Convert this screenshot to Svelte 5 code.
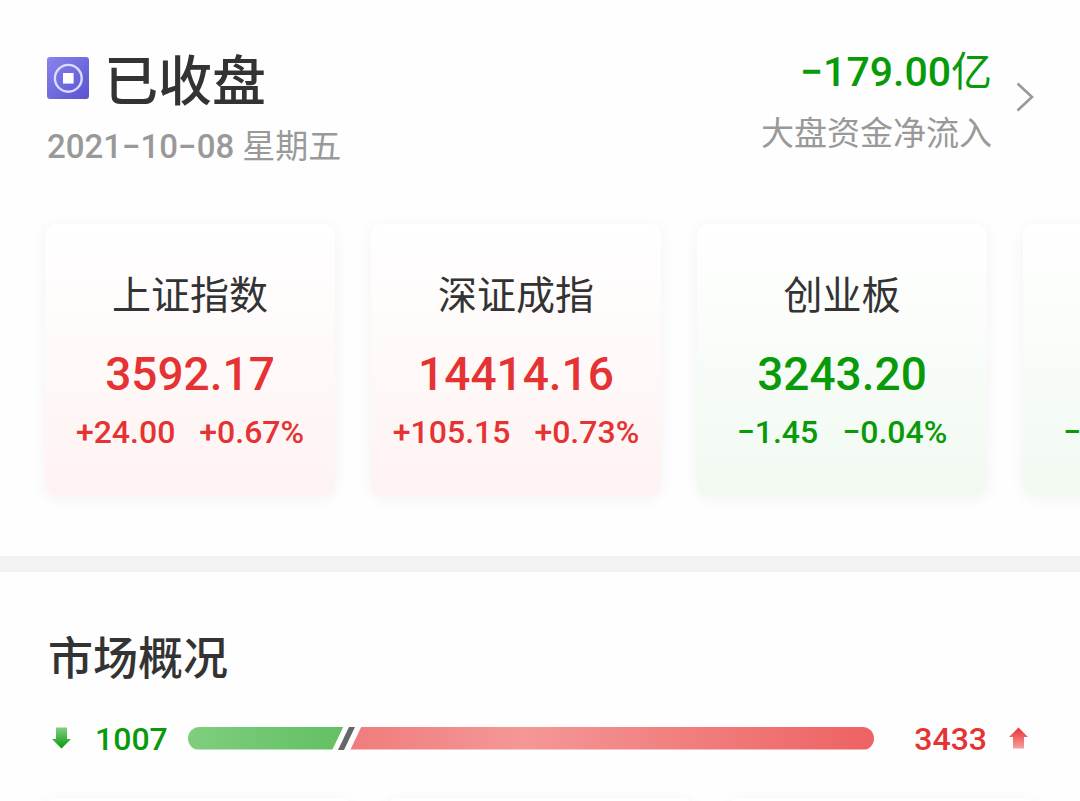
<script>
  const indices = [
    { name: '上证指数', value: '3592.17', change: '+24.00', percent: '+0.67%', trend: 'up' },
    { name: '深证成指', value: '14414.16', change: '+105.15', percent: '+0.73%', trend: 'up' },
    { name: '创业板', value: '3243.20', change: '−1.45', percent: '−0.04%', trend: 'down' },
    { name: '', value: '', change: '−', percent: '', trend: 'down', partial: true }
  ];
  const fallers = 1007;
  const risers = 3433;
  const fallShare = (fallers / (fallers + risers)) * 100;
</script>

<main class="page">
  <header class="header">
    <div class="status">
      <div class="title-row">
        <svg class="logo" viewBox="0 0 42 42" aria-hidden="true">
          <defs>
            <linearGradient id="logo-fill" x1="0" y1="0" x2="1" y2="1">
              <stop offset="0" stop-color="#8785ee" />
              <stop offset="1" stop-color="#5a52d0" />
            </linearGradient>
          </defs>
          <rect width="42" height="42" rx="3" fill="url(#logo-fill)" />
          <circle cx="21.3" cy="21.3" r="13.4" fill="none" stroke="#dcdcfb" stroke-width="2.4" />
          <rect x="16" y="16" width="10.6" height="10.6" fill="#fff" />
        </svg>
        <h1>已收盘</h1>
      </div>
      <p class="date"><span class="digits">2021−10−08</span> 星期五</p>
    </div>
    <a class="flow" href="#flow">
      <span class="flow-text">
        <span class="amount down"><span class="digits">−179.00</span>亿</span>
        <span class="flow-label">大盘资金净流入</span>
      </span>
      <svg class="chevron" viewBox="0 0 18 30" aria-hidden="true">
        <path d="M1.5 1.5 L16 15 L1.5 28.5" fill="none" stroke="#999" stroke-width="2.6" />
      </svg>
    </a>
  </header>

  <section class="indices">
    {#each indices as item}
      <article class="card {item.trend}" class:partial={item.partial}>
        <h3>{item.name}</h3>
        <p class="value">{item.value}</p>
        <p class="changes"><span>{item.change}</span><span>{item.percent}</span></p>
      </article>
    {/each}
  </section>

  <section class="overview">
    <h2>市场概况</h2>
    <div class="breadth">
      <svg class="arrow" viewBox="0 0 20 22" aria-hidden="true">
        <defs>
          <linearGradient id="fall-fill" x1="0" y1="0" x2="0" y2="1">
            <stop offset="0" stop-color="#85cc85" />
            <stop offset="1" stop-color="#099a09" />
          </linearGradient>
        </defs>
        <path d="M5 0.5 H16 V12 H20 L10.5 21.5 L1 12 H5 Z" fill="url(#fall-fill)" />
      </svg>
      <span class="count down">{fallers}</span>
      <div class="bar">
        <div class="fall" style="width: {fallShare}%"></div>
        <svg class="slash" viewBox="0 0 17 23" aria-hidden="true">
          <path d="M11 0 H17 L6 23 H0 Z" fill="#666" />
        </svg>
        <div class="rise"></div>
      </div>
      <span class="count up">{risers}</span>
      <svg class="arrow" viewBox="0 0 20 22" aria-hidden="true">
        <defs>
          <linearGradient id="rise-fill" x1="0" y1="0" x2="0" y2="1">
            <stop offset="0" stop-color="#e83030" />
            <stop offset="1" stop-color="#f7a0a0" />
          </linearGradient>
        </defs>
        <path d="M4 21.5 H15 V10 H19 L9.5 0.5 L0 10 H4 Z" fill="url(#rise-fill)" />
      </svg>
    </div>
    <div class="tiles">
      <div class="tile"></div>
      <div class="tile"></div>
      <div class="tile"></div>
    </div>
  </section>
</main>

<style>
  :global(body) {
    margin: 0;
    background: #fefefe;
  }
  .page {
    box-sizing: border-box;
    height: 100vh;
    overflow: hidden;
    display: flex;
    flex-direction: column;
    background: #fefefe;
    color: #333;
    font-family: Roboto, "Noto Sans CJK SC", sans-serif;
  }
  h1, h2, h3, p {
    margin: 0;
  }
  .up { color: #e53333; }
  .down { color: #099a09; }
  .digits { font-weight: 500; }

  .header {
    display: flex;
    justify-content: space-between;
    height: 132px;
    padding: 44px 46px 0 47px;
  }
  .title-row {
    display: flex;
    gap: 15px;
    height: 72px;
  }
  .logo {
    width: 42px;
    height: 42px;
    margin-top: 13px;
  }
  h1 {
    font-size: 54px;
    line-height: 78px;
    font-weight: 500;
  }
  .date {
    font-size: 33px;
    line-height: 62px;
    color: #999;
  }
  .flow {
    display: flex;
    align-items: center;
    gap: 24px;
    height: 106px;
    color: #999;
    text-decoration: none;
  }
  .flow-text {
    display: flex;
    flex-direction: column;
    align-items: flex-end;
    padding-top: 18px;
  }
  .amount {
    font-size: 41px;
    line-height: 56px;
  }
  .flow-label {
    font-size: 33px;
    line-height: 68px;
  }
  .chevron {
    width: 18px;
    height: 30px;
  }

  .indices {
    display: flex;
    gap: 36px;
    padding: 48px 0 60px 45px;
    overflow: hidden;
    flex: none;
    border-bottom: 16px solid #f3f3f3;
  }
  .card {
    box-sizing: border-box;
    flex: 0 0 290px;
    height: 272px;
    padding-top: 42px;
    border-radius: 12px;
    text-align: center;
    box-shadow: 0 2px 16px rgba(0, 0, 0, 0.05);
  }
  .card.up { background: linear-gradient(#fff, #fef3f2); }
  .card.down { background: linear-gradient(#fff, #f1f9f1); }
  h3 {
    height: 60px;
    font-size: 39px;
    line-height: 60px;
    font-weight: 400;
    color: #333;
  }
  .value {
    height: 72px;
    font-size: 46px;
    line-height: 96px;
    font-weight: 500;
  }
  .changes {
    display: flex;
    justify-content: center;
    gap: 24px;
    font-size: 32px;
    line-height: 68px;
    font-weight: 500;
  }
  .partial .changes {
    justify-content: flex-start;
    padding-left: 40px;
  }

  .overview {
    padding: 54px 45px 0;
  }
  h2 {
    padding-left: 3px;
    font-size: 45px;
    line-height: 68px;
    font-weight: 500;
  }
  .breadth {
    display: flex;
    align-items: center;
    height: 60px;
    margin-top: 14px;
    padding: 0 6px;
  }
  .arrow {
    flex: none;
    width: 20px;
    height: 22px;
  }
  .count {
    font-size: 32px;
    line-height: 60px;
    padding-top: 2px;
    font-weight: 500;
  }
  .count.down { margin: 0 20px 0 24px; }
  .count.up { margin: 0 22px 0 40px; }
  .bar {
    flex: 1;
    display: flex;
    height: 23px;
    border-radius: 12px;
    overflow: hidden;
  }
  .fall {
    flex: none;
    background: linear-gradient(90deg, #7fce7f, #62c062);
    clip-path: polygon(0 0, 100% 0, calc(100% - 11px) 100%, 0 100%);
  }
  .slash {
    flex: none;
    width: 17px;
    height: 23px;
    margin: 0 -5px;
  }
  .rise {
    flex: 1;
    background: linear-gradient(90deg, #f07c7c, #f49797 33%, #ee6262);
    clip-path: polygon(11px 0, 100% 0, 100% 100%, 0 100%);
  }
  .tiles {
    display: grid;
    grid-template-columns: repeat(3, 1fr);
    gap: 33px;
    margin-top: 30px;
  }
  .tile {
    height: 180px;
    border-radius: 12px;
    background: #fff;
    box-shadow: 0 2px 16px rgba(0, 0, 0, 0.05);
  }
</style>
